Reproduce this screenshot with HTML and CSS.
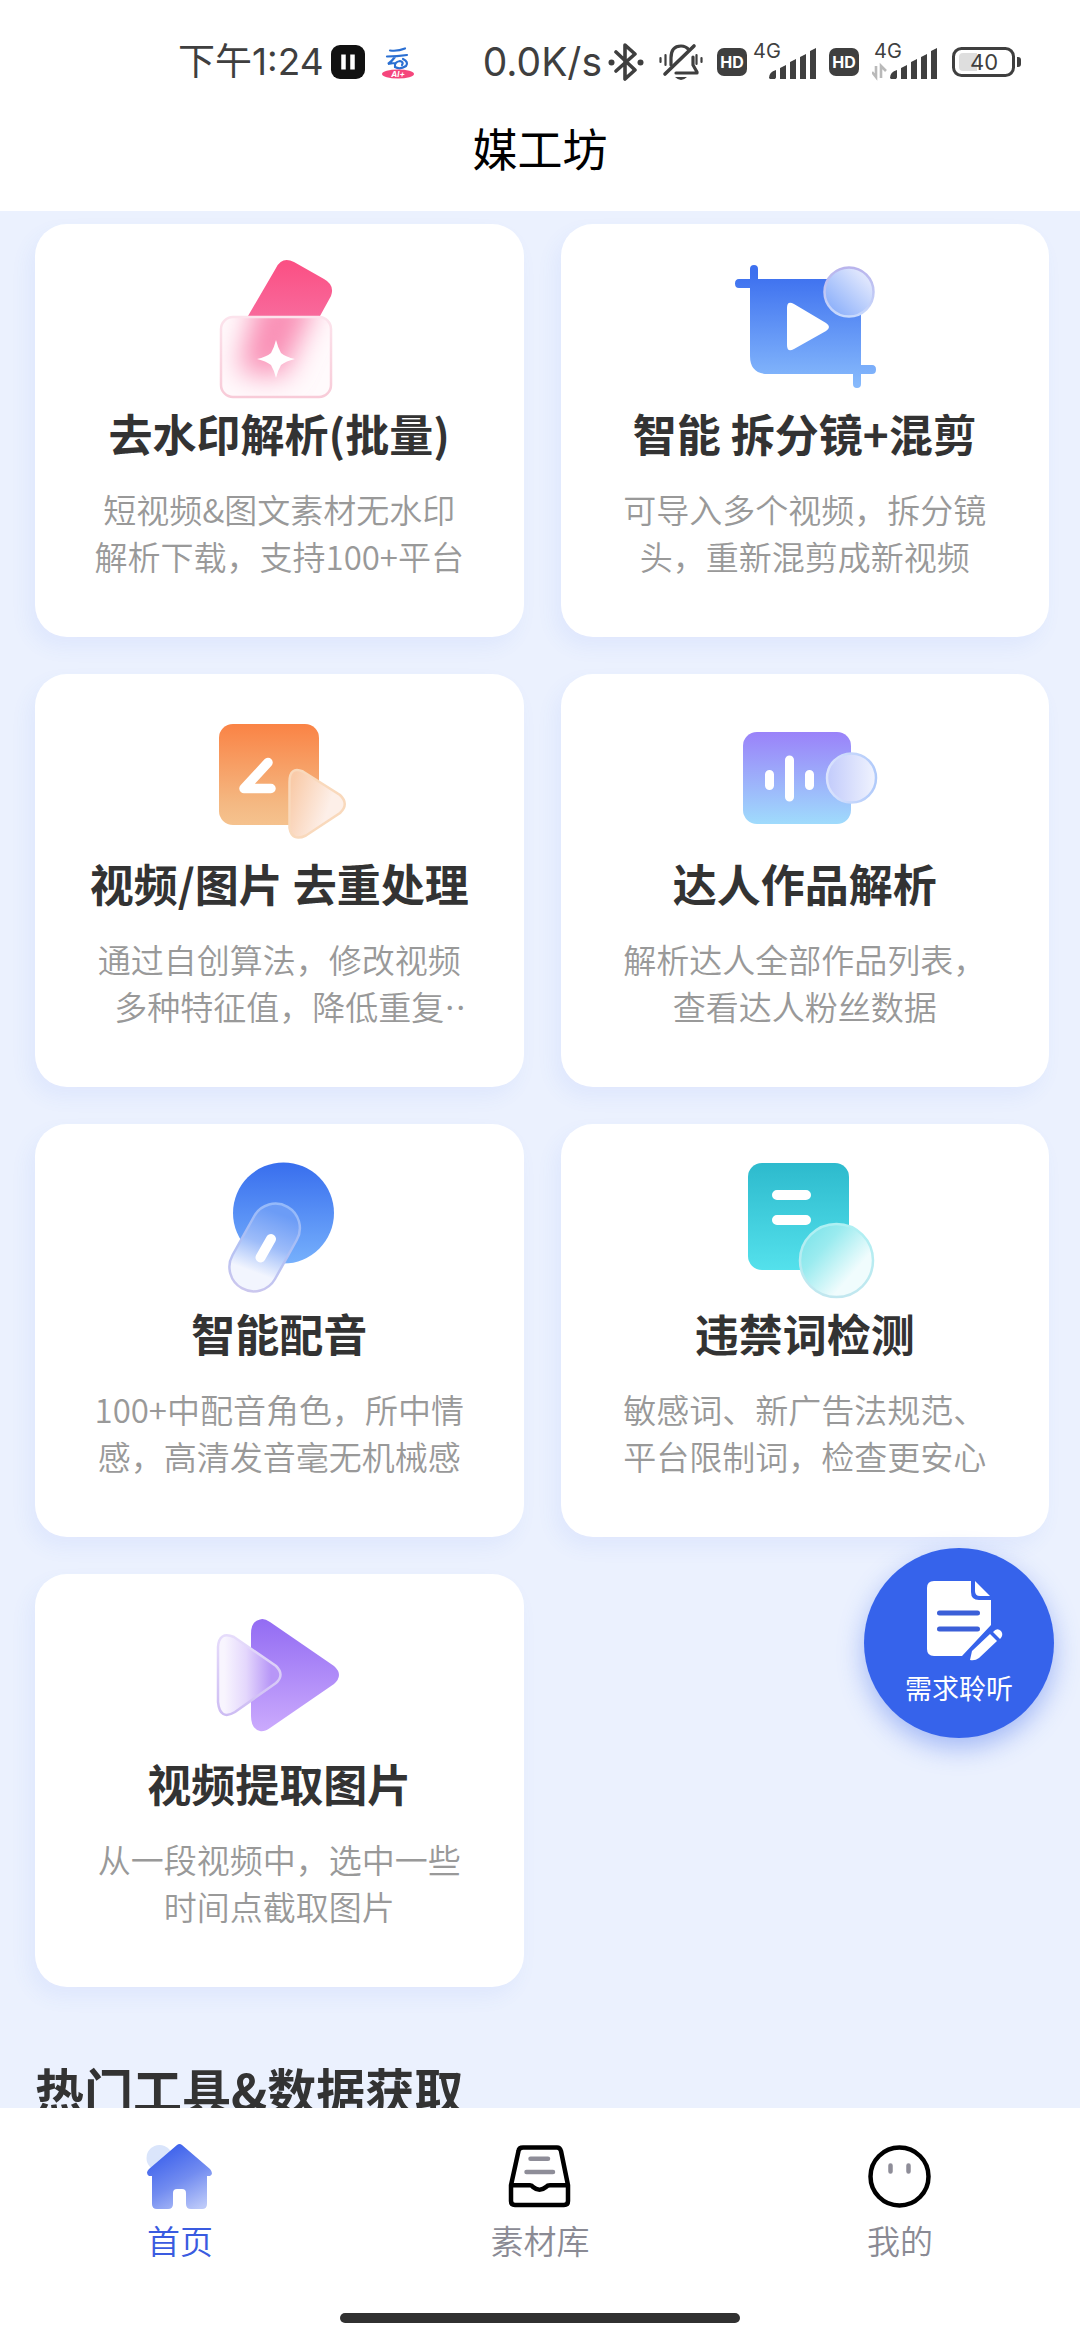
FILE: index.html
```html
<!DOCTYPE html>
<html lang="zh-CN">
<head>
<meta charset="utf-8">
<meta name="viewport" content="width=device-width, initial-scale=1">
<title>媒工坊</title>
<link rel="stylesheet" href="styles.css">
</head>
<body>
<header class="header">
  <div class="status">
    <div class="status-left">
      <span class="status-text">下午1:24</span>
      <svg class="ic-pause" viewBox="0 0 34 34" width="34" height="34" aria-hidden="true"><rect width="34" height="34" rx="9" fill="#111"/><path d="M12.500 9.500v15M21.500 9.500v15" stroke="#fff" stroke-width="4.500"/></svg>
      <svg class="ic-cloud" viewBox="0 0 34 34" width="34" height="34" aria-hidden="true">
        <path d="M9 5.500q8 1 15-2M6 11.500q10 0 20-1.500M14 12q-3 4-7 7 5-1 8-1M22 14q6 3 3 7-6 4-11 1-1-5 5-6 4 1 2 4" fill="none" stroke="#2a6fd2" stroke-width="2.200" stroke-linecap="round"/>
        <ellipse cx="17" cy="29" rx="16" ry="4.500" fill="#f5467c"/>
        <text x="17" y="32" text-anchor="middle" class="cloud-tag">AI+</text>
      </svg>
    </div>
    <div class="status-right">
      <span class="status-text status-speed">0.0K/s</span>
      <svg class="ic-bt" viewBox="0 0 36 38" width="36" height="38" aria-hidden="true"><path d="M8 9l19 18-10 9V2l10 9L8 28" fill="none" stroke="#3f3f3f" stroke-width="3.600" stroke-linejoin="round" stroke-linecap="round"/><circle cx="3.500" cy="19.500" r="3" fill="#3f3f3f"/><circle cx="32.500" cy="19.500" r="3" fill="#3f3f3f"/></svg>
      <svg class="ic-bell" viewBox="0 0 44 38" width="44" height="38" aria-hidden="true">
        <g fill="none" stroke="#3f3f3f" stroke-linecap="round">
          <path d="M12 22V15q0-12 10-12 5 0 8 4M34 14v8l4 7v1H17" stroke-width="3.200" stroke-linejoin="round"/>
          <path d="M6 31L35 3" stroke-width="3.600"/>
          <path d="M1.500 15v4M6.500 12v10M37.500 12v9M42.500 15v4" stroke-width="2.200"/>
        </g>
        <path d="M16 34h12q-6 6-12 0z" fill="#3f3f3f"/>
      </svg>
      <span class="hd">HD</span>
      <svg class="ic-signal" viewBox="0 -6 66 50" width="66" height="50" aria-hidden="true">
        <text x="1" y="15" class="net">4G</text>
        <path d="M17 35q0-6 7-8v7.500l-1 1.500h-5zM28 25l6-3v14h-6zM38 19l6-3v20h-6zM48 14l6-3v25h-6zM58 8l6-3v31h-6z" fill="#3f3f3f"/>
      </svg>
      <span class="hd hd-second">HD</span>
      <svg class="ic-signal ic-signal-second" viewBox="0 -6 66 50" width="66" height="50" aria-hidden="true">
        <text x="2" y="15" class="net">4G</text>
        <path d="M4 23v11l-4-5M9 35V23l5 5" fill="none" stroke="#b9b9b9" stroke-width="2.600"/>
        <path d="M18 35q0-6 7-8v7.500l-1 1.500h-5zM29 25l6-3v14h-6zM39 19l6-3v20h-6zM49 14l6-3v25h-6zM59 8l6-3v31h-6z" fill="#3f3f3f"/>
      </svg>
      <svg class="ic-battery" viewBox="0 0 70 30" width="70" height="30" aria-hidden="true"><rect x="1.500" y="1.500" width="60" height="27" rx="8" fill="none" stroke="#3f3f3f" stroke-width="3"/><path d="M11 6h14v18H11q-4 0-4-4V10q0-4 4-4z" fill="#dedede"/><path d="M65 10h1q3 0 3 3v4q0 3-3 3h-1z" fill="#3f3f3f"/><text x="32" y="23" text-anchor="middle" class="level">40</text></svg>
    </div>
  </div>
  <h1 class="page-title">媒工坊</h1>
</header>

<main class="content">
  <section class="grid">
    <a class="card" href="#">
      <svg class="card-icon" viewBox="0 0 150 150" aria-hidden="true">
        <defs>
          <linearGradient id="p1" x1="0" y1="0" x2="0" y2="1"><stop offset="0" stop-color="#fb4f83"/><stop offset="1" stop-color="#f8699b"/></linearGradient>
          <linearGradient id="p2" x1="0" y1="0" x2="0" y2="1"><stop offset="0" stop-color="#fce3ec"/><stop offset="1" stop-color="#f8cbd8"/></linearGradient>
          <clipPath id="pc"><rect x="16" y="62" width="112" height="82" rx="13"/></clipPath>
          <filter id="pb" x="-50%" y="-50%" width="200%" height="200%"><feGaussianBlur stdDeviation="14"/></filter>
        </defs>
        <path d="M44 62L72 14Q78 2 90 8L120 25Q131 31 127 42L116 62z" fill="url(#p1)"/>
        <rect x="16" y="62" width="112" height="82" rx="13" fill="#fffafc"/>
        <g clip-path="url(#pc)"><path d="M54 40H116L80 122 34 118z" fill="#f98fb5" filter="url(#pb)"/></g>
        <rect x="17" y="63" width="110" height="80" rx="12" fill="none" stroke="url(#p2)" stroke-width="2.500"/>
        <path d="M72 86q2 8 5 13 5 4 14 6-9 2-14 6-3 5-5 13-2-8-5-13-5-4-14-6 9-2 14-6 3-5 5-13z" fill="#fff"/>
      </svg>
      <h2 class="card-title">去水印解析(批量)</h2>
      <p class="card-desc">短视频&amp;图文素材无水印解析下载，支持100+平台</p>
    </a>

    <a class="card" href="#">
      <svg class="card-icon" viewBox="0 0 150 150" aria-hidden="true">
        <defs>
          <linearGradient id="b1" gradientUnits="userSpaceOnUse" x1="0" y1="20" x2="0" y2="130"><stop offset="0" stop-color="#3d70ef"/><stop offset="1" stop-color="#86b9fc"/></linearGradient>
          <linearGradient id="b2" x1="0" y1="1" x2="1" y2="0"><stop offset=".1" stop-color="#89aefa"/><stop offset=".8" stop-color="#dde5fd"/></linearGradient>
          <linearGradient id="b3" x1="0" y1="0" x2="0" y2="1"><stop offset="0" stop-color="#b9b4ec"/><stop offset="1" stop-color="#c8dafd"/></linearGradient>
        </defs>
        <path d="M20 25V15q0-4 4-4t4 4V25H131V111h11q4 0 4 4.500t-4 4.500h-11v10q0 4-4 4t-4-4v-10H38q-18 0-18-18V34H9q-4 0-4-4.500T9 25z" fill="url(#b1)"/>
        <path d="M57 54q0-8 7-4L96 69q6 4 0 8L64 95q-7 4-7-4z" fill="#fff"/>
        <circle cx="119" cy="38" r="24.500" fill="url(#b2)" stroke="url(#b3)" stroke-width="2.500"/>
      </svg>
      <h2 class="card-title">智能 拆分镜+混剪</h2>
      <p class="card-desc">可导入多个视频，拆分镜头，重新混剪成新视频</p>
    </a>

    <a class="card" href="#">
      <svg class="card-icon" viewBox="0 0 150 150" aria-hidden="true">
        <defs>
          <linearGradient id="o1" x1="0" y1="0" x2="0" y2="1"><stop offset="0" stop-color="#fa8345"/><stop offset=".8" stop-color="#f4b983"/><stop offset="1" stop-color="#f5c28e"/></linearGradient>
          <linearGradient id="o2" x1="0" y1="0.300" x2="1" y2="0.700"><stop offset="0" stop-color="#f9cba9"/><stop offset=".7" stop-color="#fdefe8"/></linearGradient>
        </defs>
        <rect x="15" y="20" width="100" height="101" rx="14" fill="url(#o1)"/>
        <path d="M64 58.500L40 84.500H67" fill="none" stroke="#fff" stroke-width="9.500" stroke-linecap="round" stroke-linejoin="round"/>
        <path d="M85.500 78Q85.500 62 99 67.500L136 91Q145.500 100 136 109L102 131.500Q88 138 85.500 124z" fill="url(#o2)" stroke="#f9d9bc" stroke-width="2.500"/>
      </svg>
      <h2 class="card-title">视频/图片 去重处理</h2>
      <p class="card-desc">通过自创算法，修改视频多种特征值，降低重复率，</p>
    </a>

    <a class="card" href="#">
      <svg class="card-icon" viewBox="0 0 150 150" aria-hidden="true">
        <defs>
          <linearGradient id="v1" x1="0" y1="0" x2="0" y2="1"><stop offset="0" stop-color="#9a82f9"/><stop offset="1" stop-color="#9fdbfc"/></linearGradient>
          <linearGradient id="v2" x1="0" y1="0" x2="1" y2="0"><stop offset="0" stop-color="#c2cbfb"/><stop offset="1" stop-color="#f0f3fe"/></linearGradient>
          <linearGradient id="v3" x1="0" y1="0" x2="1" y2="0"><stop offset="0" stop-color="#dbe3fd"/><stop offset="1" stop-color="#b0cafa"/></linearGradient>
        </defs>
        <rect x="13" y="28" width="108" height="92" rx="14" fill="url(#v1)"/>
        <path d="M39.500 70.500v11M59.500 56v37M79.500 70.500v11" stroke="#fff" stroke-width="9" stroke-linecap="round"/>
        <circle cx="121.500" cy="74" r="24.500" fill="url(#v2)" stroke="url(#v3)" stroke-width="2.500"/>
      </svg>
      <h2 class="card-title">达人作品解析</h2>
      <p class="card-desc">解析达人全部作品列表，查看达人粉丝数据</p>
    </a>

    <a class="card" href="#">
      <svg class="card-icon" viewBox="0 0 150 150" aria-hidden="true">
        <defs>
          <linearGradient id="d1" x1="0" y1="0" x2="0" y2="1"><stop offset="0" stop-color="#386eee"/><stop offset="1" stop-color="#76b0fc"/></linearGradient>
          <linearGradient id="d2" gradientUnits="userSpaceOnUse" x1="76" y1="60" x2="50" y2="130"><stop offset="0" stop-color="#6c9cf6"/><stop offset=".45" stop-color="#9dbcf9"/><stop offset=".85" stop-color="#f2f5fe"/></linearGradient>
          <linearGradient id="d3" gradientUnits="userSpaceOnUse" x1="76" y1="50" x2="50" y2="138"><stop offset="0" stop-color="#94b9fa"/><stop offset="1" stop-color="#cbc7ee"/></linearGradient>
        </defs>
        <circle cx="79.500" cy="59" r="50.500" fill="url(#d1)"/>
        <path d="M50.300 62L28.600 101A24 24 0 0 0 71 125L92.700 86A24 24 0 0 0 50.300 62z" fill="url(#d2)" stroke="url(#d3)" stroke-width="2.500"/>
        <path d="M67 85L56.500 103.500" stroke="#fff" stroke-width="10" stroke-linecap="round"/>
      </svg>
      <h2 class="card-title">智能配音</h2>
      <p class="card-desc">100+中配音角色，所中情感，高清发音毫无机械感</p>
    </a>

    <a class="card" href="#">
      <svg class="card-icon" viewBox="0 0 150 150" aria-hidden="true">
        <defs>
          <linearGradient id="t1" x1="0" y1="0" x2="0" y2="1"><stop offset="0" stop-color="#2dbacd"/><stop offset="1" stop-color="#54e1ec"/></linearGradient>
          <linearGradient id="t2" x1=".1" y1=".1" x2=".9" y2=".8"><stop offset="0" stop-color="#7fe4ea"/><stop offset=".3" stop-color="#9aebef"/><stop offset=".8" stop-color="#f0fcfd"/></linearGradient>
          <linearGradient id="t3" x1="0" y1="0" x2="0" y2="1"><stop offset="0" stop-color="#aef0f3"/><stop offset="1" stop-color="#c2e7ef"/></linearGradient>
        </defs>
        <rect x="18" y="9" width="101" height="107" rx="14" fill="url(#t1)"/>
        <path d="M47 41h29M47 66h29" stroke="#fff" stroke-width="10" stroke-linecap="round"/>
        <circle cx="106.500" cy="106.500" r="36.500" fill="url(#t2)" stroke="url(#t3)" stroke-width="2.500"/>
      </svg>
      <h2 class="card-title">违禁词检测</h2>
      <p class="card-desc">敏感词、新广告法规范、平台限制词，检查更安心</p>
    </a>

    <a class="card" href="#">
      <svg class="card-icon" viewBox="0 0 150 150" aria-hidden="true">
        <defs>
          <linearGradient id="u1" x1="0" y1="0" x2="0" y2="1"><stop offset="0" stop-color="#936cf3"/><stop offset="1" stop-color="#cbaafd"/></linearGradient>
          <linearGradient id="u2" x1="0" y1="0" x2="1" y2="0"><stop offset=".1" stop-color="#f8f5fe"/><stop offset=".45" stop-color="#e4d7fc"/><stop offset=".85" stop-color="#b796f7"/></linearGradient>
          <linearGradient id="u3" x1="0" y1="0" x2="0" y2="1"><stop offset="0" stop-color="#e6dcfb"/><stop offset="1" stop-color="#cdbcf3"/></linearGradient>
        </defs>
        <path d="M47 30Q47 17 56 15.500 60 14 66 18L130 62Q140 71 130 80L66 124Q60 128 56 127 47 125 47 112z" fill="url(#u1)"/>
        <path d="M14 43Q15 27 30 33L72 62Q81 71 72 79L31 108Q16 117 14 98z" fill="url(#u2)" stroke="url(#u3)" stroke-width="2.500"/>
      </svg>
      <h2 class="card-title">视频提取图片</h2>
      <p class="card-desc">从一段视频中，选中一些时间点截取图片</p>
    </a>
  </section>
  <h2 class="section-title">热门工具&amp;数据获取</h2>
</main>

<button class="fab" type="button">
  <svg viewBox="0 0 90 90" width="90" height="90" aria-hidden="true">
    <path d="M20 7H57V18Q57 26 65 26H77V51L48 82H20Q13 82 13 75V14Q13 7 20 7z" fill="#fff"/>
    <path d="M61 7L76 22H66Q61 22 61 17z" fill="#fff"/>
    <path d="M25.500 39h38M25.500 55h38" stroke="#3b5fd8" stroke-width="5" stroke-linecap="round"/>
    <path d="M56 86L58 77 76 60 83 67 65 84Q61 87 56 86z" fill="#fff"/>
    <path d="M79 58Q83 53 87 57 90 61 86 65z" fill="#fff"/>
  </svg>
  <span>需求聆听</span>
</button>

<nav class="tabbar">
  <div class="tabs">
    <a class="tab tab-active" href="#">
      <svg viewBox="0 0 72 72" width="72" height="72" aria-hidden="true">
        <defs><linearGradient id="h1" x1=".3" y1=".1" x2=".8" y2="1"><stop offset="0" stop-color="#4064ec"/><stop offset=".5" stop-color="#728cf0"/><stop offset="1" stop-color="#bcc9f9"/></linearGradient></defs>
        <circle cx="15.500" cy="18" r="13" fill="#dae5fb"/>
        <path d="M33 5Q35.500 3 38 5L66 29Q70 34 66 36H63V64Q63 69 58 69H47Q42 69 42 64V53Q42 49 38 49H33Q29 49 29 53V64Q29 69 24 69H13Q8 69 8 64V36H5Q1 33 5 29z" fill="url(#h1)"/>
      </svg>
      <span>首页</span>
    </a>
    <a class="tab" href="#">
      <svg viewBox="0 0 72 72" width="72" height="72" aria-hidden="true">
        <path d="M19 7.500H53Q56 7.500 57 11L64 45.300V61Q64 65 60 65H11Q7 65 7 61V45.300L14.500 11Q15 7.500 19 7.500zM7 45.300H26Q28 45.300 29 47 35.500 52.500 42 47 43.500 45.300 46 45.300H64" fill="none" stroke="#000" stroke-width="4.500" stroke-linejoin="round"/>
        <path d="M26.500 18.700H44M22.500 32H49" stroke="#8e8d98" stroke-width="4.500" stroke-linecap="round"/>
      </svg>
      <span>素材库</span>
    </a>
    <a class="tab" href="#">
      <svg viewBox="0 0 72 72" width="72" height="72" aria-hidden="true">
        <circle cx="35.500" cy="36.500" r="29" fill="none" stroke="#000" stroke-width="4.500"/>
        <path d="M26.500 25.500v6M44.500 25.500v6" stroke="#8e8d98" stroke-width="4.500" stroke-linecap="round"/>
      </svg>
      <span>我的</span>
    </a>
  </div>
  <div class="home-indicator"></div>
</nav>
</body>
</html>
```
FILE: styles.css
```css
* {
  box-sizing: border-box;
}

body {
  margin: 0;
  height: 100vh;
  display: flex;
  flex-direction: column;
  position: relative;
  overflow: hidden;
  background: #ebf1fe;
  color: #333;
  font-family: "Noto Sans CJK SC", "Noto Sans", sans-serif;
  text-spacing-trim: space-all;
}

h1,
h2,
p {
  margin: 0;
}

a {
  color: inherit;
  text-decoration: none;
}

svg {
  display: block;
  flex: none;
}

/* Status bar and page title */
.header {
  flex: none;
  padding-bottom: 3px;
  background: #fff;
}

.status {
  display: flex;
  justify-content: space-between;
  align-items: center;
  height: 88px;
  padding: 36px 58px 0 178px;
}

.status-left,
.status-right {
  display: flex;
  align-items: center;
}

.status-text {
  font-family: Inter, "Noto Sans CJK SC", sans-serif;
  font-size: 37px;
  line-height: 52px;
  color: #3f3f3f;
}

.status-speed {
  font-size: 39px;
}

.ic-pause {
  margin-left: 7px;
}

.ic-cloud {
  margin-left: 16px;
}

.cloud-tag {
  font: italic 700 8px Inter, sans-serif;
  fill: #fff;
}

.ic-bt {
  margin-left: 6px;
}

.ic-bell {
  margin: 0 14px 0 15px;
}

.hd {
  width: 30px;
  height: 28px;
  border-radius: 7px;
  background: #3f3f3f;
  color: #fff;
  font: 700 16px/28px Inter, sans-serif;
  text-align: center;
}

.ic-signal {
  margin-left: 5px;
}

.hd-second {
  margin-left: 11px;
}

.ic-signal-second {
  margin: 0 14px 0 13px;
}

.net {
  font: 400 20px Inter, sans-serif;
  fill: #3f3f3f;
}

.level {
  font: 400 22px Inter, sans-serif;
  fill: #3f3f3f;
}

.page-title {
  font-size: 45px;
  line-height: 120px;
  font-weight: 400;
  text-align: center;
  color: #000;
}

/* Tool cards */
.content {
  flex: 1;
  min-height: 0;
  overflow: hidden;
  padding: 13px 31px 0 35px;
}

.grid {
  display: grid;
  grid-template-columns: repeat(2, minmax(0, 1fr));
  gap: 37px;
}

.card {
  display: flex;
  flex-direction: column;
  align-items: center;
  padding: 30px 57px 57px;
  border-radius: 32px;
  background: #fff;
  box-shadow: -6px 10px 20px rgba(70, 110, 235, 0.07);
}

.card-icon {
  width: 150px;
  height: 150px;
}

.card-title {
  font-size: 44px;
  line-height: 58px;
  font-weight: 700;
  white-space: nowrap;
}

.card-desc {
  display: -webkit-box;
  -webkit-box-orient: vertical;
  -webkit-line-clamp: 2;
  overflow: hidden;
  width: 100%;
  margin-top: 24px;
  font-size: 33px;
  line-height: 47px;
  font-weight: 350;
  text-align: center;
  color: #999;
}

.section-title {
  margin-top: 66px;
  font-size: 49px;
  line-height: 72px;
  font-weight: 700;
}

/* Floating feedback button */
.fab {
  position: absolute;
  right: 26px;
  bottom: 602px;
  display: flex;
  flex-direction: column;
  align-items: center;
  gap: 4px;
  width: 190px;
  height: 190px;
  padding: 26px 0 0;
  border: 0;
  border-radius: 50%;
  background: #3663eb;
  box-shadow: 0 10px 26px rgba(54, 99, 235, 0.4);
  color: #fff;
  font-family: inherit;
  font-size: 27px;
  line-height: 40px;
}

/* Bottom navigation */
.tabbar {
  flex: none;
  padding: 32px 0 17px;
  background: #fff;
}

.tabs {
  display: grid;
  grid-template-columns: repeat(3, 1fr);
}

.tab {
  display: flex;
  flex-direction: column;
  align-items: center;
  gap: 6px;
  font-size: 33px;
  line-height: 44px;
  font-weight: 350;
  color: #8a8a94;
}

.tab-active {
  color: #3a5be0;
}

.home-indicator {
  width: 400px;
  height: 10px;
  margin: 51px auto 0;
  border-radius: 5px;
  background: #313131;
}
```
